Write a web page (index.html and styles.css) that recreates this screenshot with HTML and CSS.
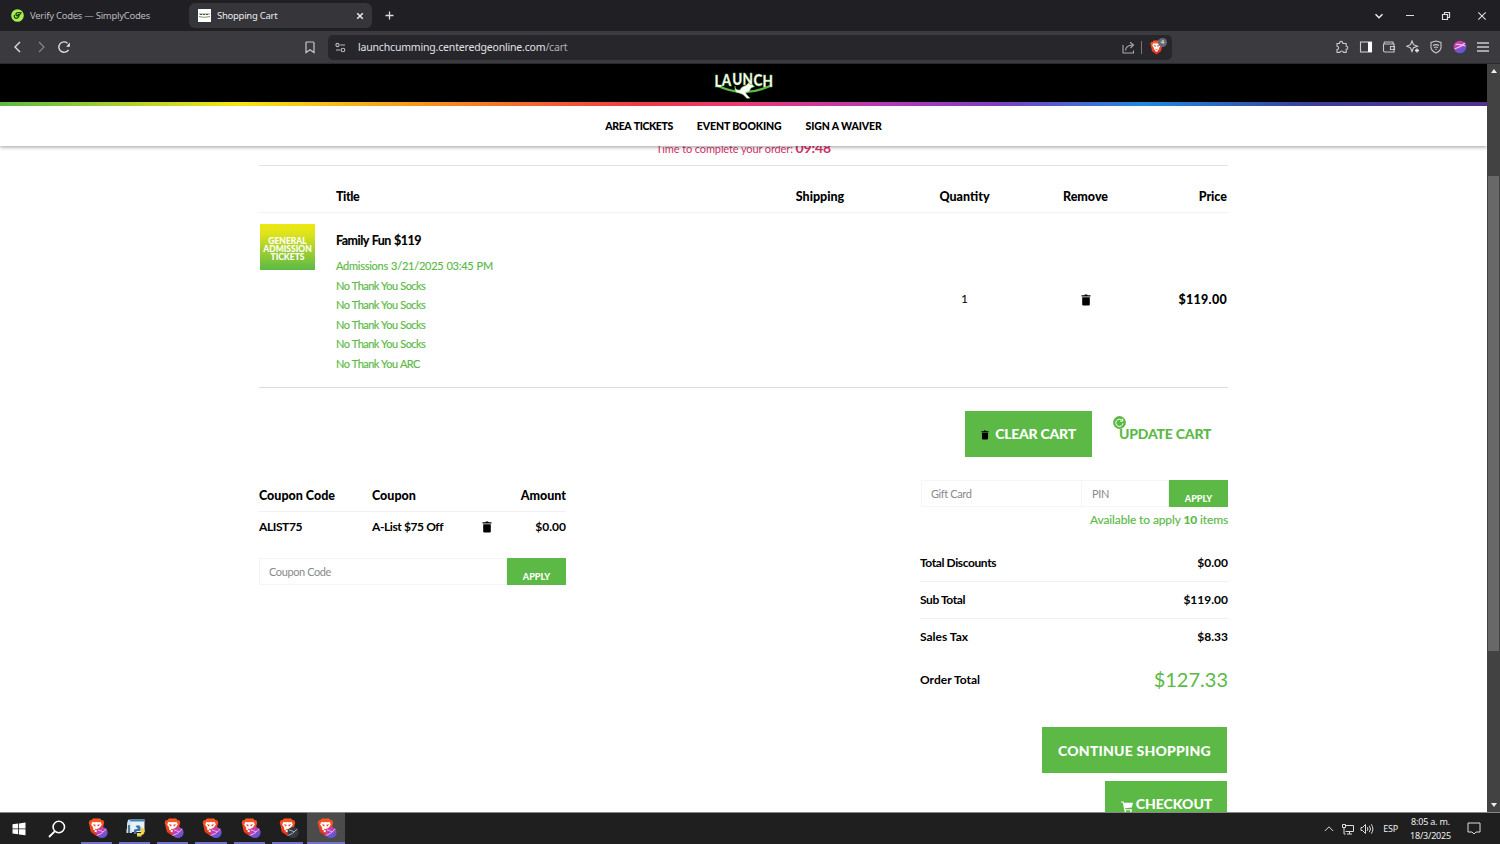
FILE: index.html
```html
<!DOCTYPE html>
<html>
<head>
  <meta charset="UTF-8">
  <title>Shopping Cart</title>
  <link rel="stylesheet" href="styles.css">
</head>
<body>
  <svg width="0" height="0" class="defs">
    <defs>
      <linearGradient id="pinkblue" x1="0" y1="0" x2="0.6" y2="1">
        <stop offset="0" stop-color="#f2358d"/>
        <stop offset="0.45" stop-color="#b544b8"/>
        <stop offset="1" stop-color="#4d5bd8"/>
      </linearGradient>
      <linearGradient id="orange" x1="0" y1="0" x2="0" y2="1">
        <stop offset="0" stop-color="#ff5a24"/>
        <stop offset="1" stop-color="#e0301c"/>
      </linearGradient>
    </defs>
    <symbol id="lion" viewBox="0 0 16 18">
      <path fill="url(#orange)" d="M4.500 0.500h7l1.500 1.600 1.600.2 1 2.600-.5 1.200-1.600 7.400L8 17.600l-5.500-4.100L.9 6.100.4 4.900l1-2.600L3 2.100z"/>
      <path fill="#fff" d="M4 3.800l2.500.3L8 3.800l1.500.3 2.500-.3 1.200 2.600-2 3.200.1 1.800-2 .8.8 1L8 14.200l-2.100-1 .8-1-2-.8.1-1.800-2-3.200z"/>
      <path fill="#e8401f" d="M4.300 6l2.900.6-.6 2zM11.700 6l-2.900.6.6 2zM6.500 10.200L8 11l1.500-.8-.5 1.600H7z"/>
    </symbol>
    <symbol id="brave" viewBox="0 0 20 21">
      <svg width="17" height="18.500"><use href="#lion"/></svg>
      <circle cx="14" cy="14.500" r="5.600" fill="url(#pinkblue)"/>
      <path d="M8.700 17.500q5-1 9.500-6.500M10 12q3 .5 5 2" stroke="#f6bff0" stroke-width=".9" fill="none"/>
    </symbol>
    <symbol id="trash" viewBox="0 0 10 12">
      <path d="M.5 1.300h2.700L4 .5h2l.8.8h2.700v1.200h-9zM1.200 3.300h7.600v7.200q0 1-1 1H2.200q-1 0-1-1z"/>
    </symbol>
  </svg>

  <div class="tabbar">
    <div class="tab tab_back">
      <svg width="13" height="13" viewBox="0 0 13 13"><circle cx="6.500" cy="6.500" r="6.300" fill="#a4f04c"/><path d="M3.500 6q-.8 3 1.700 3.300 2.500 0 3-3.300L10 3.800q-3-.8-4.800.5Q4.500 6.500 6 7L8 5" stroke="#1d3a10" stroke-width="1.200" fill="none"/></svg>
      <span>Verify Codes — SimplyCodes</span>
    </div>
    <div class="tab on">
      <svg width="13" height="13" viewBox="0 0 13 13"><rect width="13" height="13" fill="#fff"/><path d="M1 5h11M1 7.500q5 1.500 11 0" stroke="#7c9a6a" stroke-width="1.200" fill="none"/><path d="M2 5.500h9" stroke="#46583c" stroke-dasharray="2 1"/></svg>
      <span>Shopping Cart</span>
      <svg class="close" width="8" height="8" viewBox="0 0 8 8"><path d="M1.200 1.200l5.600 5.600M6.800 1.200L1.200 6.800" stroke="#eee" stroke-width="1.500"/></svg>
    </div>
    <svg class="plus" width="9" height="9" viewBox="0 0 9 9"><path d="M4.500.5v8M.5 4.500h8" stroke="#ddd" stroke-width="1.300"/></svg>
    <div class="winbtns">
      <svg width="10" height="10" viewBox="0 0 10 10"><path d="M1.500 3.300L5 6.800l3.500-3.500" stroke="#eee" stroke-width="1.500" fill="none"/></svg>
      <svg width="10" height="10" viewBox="0 0 10 10"><path d="M1 4.500h8" stroke="#ddd"/></svg>
      <svg width="10" height="10" viewBox="0 0 10 10"><path d="M1.500 3.500h5v5h-5zM3.500 3V1.500h5v5H7" stroke="#ddd" stroke-width="1.200" fill="none"/></svg>
      <svg width="10" height="10" viewBox="0 0 10 10"><path d="M1.300 1.300l7.400 7.400M8.700 1.300L1.300 8.700" stroke="#ddd" stroke-width="1.100"/></svg>
    </div>
  </div>

  <div class="toolbar">
    <div class="nav">
      <svg width="14" height="14" viewBox="0 0 14 14"><path d="M9 2L4 7l5 5" stroke="#ddd" stroke-width="1.400" fill="none"/></svg>
      <svg width="14" height="14" viewBox="0 0 14 14"><path d="M5 2l5 5-5 5" stroke="#85858a" stroke-width="1.200" fill="none"/></svg>
      <svg width="14" height="14" viewBox="0 0 14 14"><path d="M11.500 9.800A5.200 5.200 0 1 1 10.500 3.200" stroke="#ddd" stroke-width="1.400" fill="none"/><path d="M12.800 2.500v4.200H9.200z" fill="#eee"/></svg>
    </div>
    <svg class="bookmark" width="10" height="13" viewBox="0 0 10 13"><path d="M2 1h6q1 0 1 1v9.500L5 8.700 1 11.500V2q0-1 1-1z" stroke="#c8c8cc" stroke-width="1.200" fill="none"/></svg>
    <div class="address">
      <svg width="11" height="11" viewBox="0 0 11 11"><g stroke="#bbb" stroke-width="1.100" fill="none"><circle cx="2.500" cy="3" r="1.600"/><path d="M5.300 3H10M1 8h4.500"/><circle cx="8" cy="8" r="1.800"/></g></svg>
      <span class="url">launchcumming.centeredgeonline.com<i>/cart</i></span>
      <svg width="13" height="13" viewBox="0 0 13 13"><path d="M1 4v8h10.500V9.500M3.500 9.500q.3-5 7-5.500M8 1.300L11.500 4 8.500 7" stroke="#aaaaae" stroke-width="1.100" fill="none"/></svg>
      <b class="sep"></b>
      <span class="shield"><svg width="13" height="15"><use href="#lion"/></svg><em>4</em></span>
    </div>
    <div class="tools">
      <svg width="14" height="14" viewBox="0 0 14 14"><path d="M2 3.500h2.500a1.700 1.700 0 1 1 3.300 0h3.400v2.700a1.600 1.600 0 1 1 0 3.200v3H8.500a1.800 1.800 0 0 0-3.500 0H2V9.500a1.600 1.600 0 0 0 0-3.200z" stroke="#c8c8cc" stroke-width="1.100" fill="none"/></svg>
      <svg width="14" height="14" viewBox="0 0 14 14"><rect x="1.500" y="2" width="11" height="10" stroke="#ccc" stroke-width="1.100" fill="none"/><path d="M9 2h4v10H9z" fill="#fff"/></svg>
      <svg width="14" height="14" viewBox="0 0 14 14"><path d="M1.500 4v6.500q0 1.500 1.500 1.500h9V4H2.500q-1-.8 0-2H11v2M12.500 6.500h-4v3h4z" stroke="#c8c8cc" stroke-width="1.100" fill="none"/></svg>
      <svg width="14" height="14" viewBox="0 0 14 14"><path d="M6 1l1.500 3.700L11.500 6.300 7.500 7.800 6 11.500 4.500 7.800.8 6.300l3.700-1.600z" stroke="#d0d0d4" stroke-width="1.100" fill="none"/><path d="M11 8.500v4M9 10.500h4" stroke="#eee" stroke-width="1.300"/></svg>
      <svg width="14" height="14" viewBox="0 0 14 14"><g stroke="#c8c8cc" stroke-width="1.100" fill="none"><path d="M7 1l5 1.500v4.700q0 3.300-5 5.800-5-2.500-5-5.800V2.500z"/><path d="M4 5.500q3-1.700 6 0M5 7.500q2-1 4 0M6.300 9.200h1.400"/></g></svg>
      <svg width="14" height="14" viewBox="0 0 14 14"><circle cx="7" cy="7" r="6.300" fill="url(#pinkblue)"/><path d="M1.500 9Q8 7 12 3M2.500 4.500Q7 4 12.500 6" stroke="#f3b8ec" stroke-width="1.200" fill="none"/></svg>
      <svg width="14" height="14" viewBox="0 0 14 14"><path d="M1 3h12M1 7h12M1 11h12" stroke="#ccc" stroke-width="1.300"/></svg>
    </div>
  </div>

  <div class="view">
    <div class="page">
      <div class="header">
        <div class="logo">
          <svg width="62" height="34" viewBox="0 0 62 34">
            <path d="M3 19Q31 33 59 19" stroke="#5cb946" stroke-width="2.400" fill="none"/>
            <text class="logotext" transform="scale(1 1.250)" x="1.500 8.800 19.300 29.500 40.500 49.500" y="17 15.700 15 15 15.700 17">LAUNCH</text>
            <path d="M22 20q0 4.500 5 4 1-3.500 6-4.500l3-3 1 2h2l2.500 2-3.500 1.500-2 3.500-3.500 1 1.500 2.500 3 3-3 .5-4-4-4-1.500q-5-.5-4-7z" fill="#fff" stroke="#6cc644" stroke-width=".5"/>
          </svg>
        </div>
        <div class="rainbow"></div>
        <div class="menu">
          <a>AREA TICKETS</a>
          <a>EVENT BOOKING</a>
          <a>SIGN A WAIVER</a>
        </div>
      </div>

      <div class="container">
        <div class="timer">Time to complete your order: <b>09:48</b></div>

        <div class="cart">
          <div class="row head">
            <span></span><span>Title</span><span>Shipping</span><span>Quantity</span><span>Remove</span><span>Price</span>
          </div>
          <div class="row item">
            <div class="thumb"><span>GENERAL</span><span>ADMISSION</span><span>TICKETS</span></div>
            <div class="info">
              <p class="name">Family Fun $119</p>
              <p class="when">Admissions 3/21/2025 03:45 PM</p>
              <p>No Thank You Socks</p>
              <p>No Thank You Socks</p>
              <p>No Thank You Socks</p>
              <p>No Thank You Socks</p>
              <p>No Thank You ARC</p>
            </div>
            <span></span>
            <span class="qty">1</span>
            <span><svg width="10" height="12"><use href="#trash"/></svg></span>
            <span class="price">$119.00</span>
          </div>
        </div>

        <div class="actions">
          <a class="btn clear"><svg width="8" height="10"><use href="#trash"/></svg>CLEAR CART</a>
          <a class="update">
            <svg width="13" height="13" viewBox="0 0 13 13"><circle cx="6.500" cy="6.500" r="6.400" fill="#5cb946"/><path d="M9.300 4.700A3.600 3.600 0 1 0 10 7.300M9.700 2.500v2.700H7.200" stroke="#fff" stroke-width="1" fill="none"/></svg>
            UPDATE CART
          </a>
        </div>

        <div class="lower">
          <div class="coupons">
            <div class="crow chead"><span>Coupon Code</span><span>Coupon</span><span></span><span>Amount</span></div>
            <div class="crow"><span class="tight">ALIST75</span><span class="tight">A-List $75 Off</span><span><svg width="10" height="12"><use href="#trash"/></svg></span><span>$0.00</span></div>
            <div class="field">
              <div class="input">Coupon Code</div>
              <div class="apply">APPLY</div>
            </div>
          </div>

          <div class="totals">
            <div class="field">
              <div class="input">Gift Card</div>
              <div class="input pin">PIN</div>
              <div class="apply">APPLY</div>
            </div>
            <div class="avail">Available to apply <b>10</b> items</div>
            <div class="line first"><span class="tight">Total Discounts</span><span>$0.00</span></div>
            <div class="line"><span class="tight">Sub Total</span><span>$119.00</span></div>
            <div class="line tax"><span>Sales Tax</span><span>$8.33</span></div>
            <div class="line total"><span>Order Total</span><span class="big">$127.33</span></div>
            <a class="btn continue">CONTINUE SHOPPING</a>
            <a class="btn checkout"><svg width="12" height="11" viewBox="0 0 12 11"><path d="M0 .5h2.500l.4 1.200H12L10.800 6.500 4 7.300l.3.900h6.500v1H3.300L1.800 1.600H0z" fill="#fff"/><circle cx="4.300" cy="10" r="1" fill="#fff"/><circle cx="9.800" cy="10" r="1" fill="#fff"/></svg>CHECKOUT</a>
          </div>
        </div>
      </div>
    </div>

    <div class="scrollbar">
      <i class="up"></i>
      <div class="thumbbar"></div>
      <i class="down"></i>
    </div>
  </div>

  <div class="taskbar">
    <div class="start"><svg width="14" height="14" viewBox="0 0 14 14"><path d="M.5 2.300l5.700-.8v5H.5zM7 1.400L13.500.5v6H7zM.5 7.300h5.700v5l-5.700-.8zM7 7.300h6.500v6L7 12.400z" fill="#fff"/></svg></div>
    <div class="search"><svg width="18" height="18" viewBox="0 0 18 18"><circle cx="10.800" cy="7" r="5.700" stroke="#fff" stroke-width="1.600" fill="none"/><path d="M6.700 11.300L1 17" stroke="#fff" stroke-width="1.800"/></svg></div>
    <div class="app"><svg width="20" height="21"><use href="#brave"/></svg></div>
    <div class="app">
      <svg width="20" height="20" viewBox="0 0 20 20"><path d="M4 1.500h14.500V14H4z" fill="#e9f1f7"/><path d="M4 1.500h14.500v2H4z" fill="#3c86bd"/><path d="M3 1q2 2 2 5v6H1V6q0-3 2-5zM.5 11h5.500v4H.5z" fill="#cfe0ea"/><path d="M2 7h2v8H2z" fill="#507a96"/><path d="M9.500 8q4-2 5 1v4h-4v3H8q-1-5 2-5h2z" fill="#3b77ab"/><path d="M15 9.500q4 0 3.500 4.500-.5 3-3 3v1.500h-4.500V15h4z" fill="#f7d445"/></svg>
    </div>
    <div class="app"><svg width="20" height="21"><use href="#brave"/></svg></div>
    <div class="app"><svg width="20" height="21"><use href="#brave"/></svg></div>
    <div class="app"><svg width="20" height="21"><use href="#brave"/></svg></div>
    <div class="app">
      <svg width="20" height="21" viewBox="0 0 20 21"><svg width="17" height="18.500"><use href="#lion"/></svg><circle cx="14" cy="14.500" r="5.600" fill="#343a42"/><path d="M8.700 17.500q5-1 9.500-6.500M10 12q3 .5 5 2" stroke="#bbb" stroke-width=".9" fill="none"/></svg>
    </div>
    <div class="app active"><svg width="20" height="21"><use href="#brave"/></svg></div>
    <div class="tray">
      <svg width="10" height="8" viewBox="0 0 10 8"><path d="M.8 6L5 1.800 9.200 6" stroke="#ddd" fill="none"/></svg>
      <svg class="net" width="14" height="12" viewBox="0 0 14 12"><path d="M4.500 2.500h8v6h-8M8.500 8.500v2.500M6 11h5M1.500 1.500h3v3h-3zM3 4.500V11h1.500" stroke="#ddd" fill="none"/></svg>
      <svg class="vol" width="14" height="12" viewBox="0 0 14 12"><path d="M1 4.500h1.500L5.500 1.500v9L2.500 7.500H1zM7.300 4.200q1.300 1.800 0 3.600M9.300 2.800q2.400 3.200 0 6.400M11.300 1.300q3.200 4.700 0 9.400" stroke="#ddd" fill="none"/></svg>
      <span class="lang">ESP</span>
      <span class="clock">8:05 a. m.<br>18/3/2025</span>
      <svg class="note" width="14" height="13" viewBox="0 0 14 13"><path d="M1 1h12v9H9L7 12 5 10H1z" stroke="#ddd" fill="none"/></svg>
    </div>
  </div>
</body>
</html>
```

FILE: styles.css
```css
* {
  margin: 0;
  padding: 0;
  box-sizing: border-box;
}
body {
  width: 1500px;
  height: 844px;
  overflow: hidden;
  display: flex;
  flex-direction: column;
  font-family: "Lato", sans-serif;
  font-size: 12px;
  color: #000;
  background: #fff;
}
svg {
  display: block;
  flex: none;
}
.defs {
  position: absolute;
}
i, em {
  font-style: normal;
}

/* browser */
.tabbar {
  height: 31px;
  flex: none;
  display: flex;
  align-items: center;
  background: #1f1f24;
  font-family: "Noto Sans", sans-serif;
  font-size: 9.500px;
  letter-spacing: -0.270px;
  color: #b9b9be;
}
.tab {
  display: flex;
  align-items: center;
  height: 25px;
}
.tab span {
  margin-left: 6px;
}
.tab_back {
  width: 189px;
  padding-left: 11px;
}
.tab.on {
  width: 183px;
  padding: 0 8px 0 9px;
  border-radius: 6px;
  background: #35353a;
  color: #ececee;
}
.tab .close {
  margin-left: auto;
}
.plus {
  margin-left: 13px;
}
.winbtns {
  margin-left: auto;
  margin-right: 13px;
  display: flex;
  gap: 26px;
}
.winbtns svg:first-child {
  margin-right: -5px;
}
.toolbar {
  height: 33px;
  flex: none;
  display: flex;
  align-items: center;
  background: #3b3b3f;
  border-bottom: 1px solid #2a2a2d;
  font-family: "Noto Sans", sans-serif;
}
.nav {
  display: flex;
  gap: 9px;
  margin-left: 11px;
}
.bookmark {
  margin-left: 234px;
}
.address {
  width: 844px;
  height: 25px;
  margin-left: 13px;
  padding: 0 5px 0 7px;
  display: flex;
  align-items: center;
  border-radius: 5px;
  background: #26262b;
}
.url {
  flex: 1;
  margin-left: 12px;
  padding-bottom: 1px;
  font-size: 10.500px;
  letter-spacing: -0.180px;
  color: #e2e2e5;
}
.url i {
  color: #b0b0b5;
}
.sep {
  width: 1px;
  height: 13px;
  margin: 0 8px 0 6px;
  background: #77777c;
}
.shield {
  position: relative;
  width: 17px;
}
.shield em {
  position: absolute;
  left: 8px;
  top: -2px;
  width: 9px;
  height: 9px;
  border-radius: 50%;
  background: #656a76;
  color: #fff;
  font-size: 6px;
  line-height: 9px;
  text-align: center;
}
.tools {
  margin-left: auto;
  margin-right: 10px;
  display: flex;
  gap: 9.500px;
}

/* page */
.view {
  height: 749px;
  flex: none;
  display: flex;
  overflow: hidden;
  border-bottom: 1px solid #888;
}
.page {
  width: 1487px;
  overflow: hidden;
}
.header {
  position: relative;
  z-index: 2;
  height: 82px;
  background: #fff;
  box-shadow: 0 1px 4px rgba(0,0,0,0.4);
}
.logo {
  height: 38px;
  background: #000;
  display: flex;
  align-items: center;
  justify-content: center;
}
.logotext {
  font-size: 13.500px;
  font-weight: 900;
  fill: #fff;
  stroke: #6cc644;
  stroke-width: 0.300px;
}
.rainbow {
  height: 4px;
  background: linear-gradient(90deg, #5cb946, #f5e614 16%, #f68b1f 30%, #ee3a43 43%, #e83a75 50%, #b03bb8 60%, #7d3fc0 67%, #1f8ade 77%, #3b3f9c 88%, #55308f);
}
.menu {
  height: 40px;
  display: flex;
  align-items: center;
  justify-content: center;
  gap: 24px;
  font-size: 10.500px;
  font-weight: 900;
  letter-spacing: -0.120px;
}
.menu a:first-child {
  letter-spacing: -0.400px;
  word-spacing: 1px;
}
.container {
  width: 969px;
  margin-left: 259px;
}
.timer {
  height: 19px;
  line-height: 15px;
  margin-top: -8px;
  padding-top: 2px;
  text-align: center;
  font-size: 11px;
  letter-spacing: -0.120px;
  color: #d6336c;
  box-sizing: content-box;
}
.timer b {
  font-size: 14px;
}
.cart {
  margin-top: 6px;
  border-top: 1px solid #e2e2e2;
  border-bottom: 1px solid #ddd;
}
.row {
  display: grid;
  grid-template-columns: 77px 412px 144px 145px 97px 93px;
  align-items: center;
  text-align: center;
}
.head {
  height: 47px;
  padding-top: 14px;
  border-bottom: 1px solid #f2f2f2;
  font-size: 12.500px;
  font-weight: 900;
}
.head span:nth-child(2) {
  text-align: left;
  letter-spacing: -0.400px;
}
.row > :last-child {
  text-align: right;
}
.item {
  height: 174px;
}
.item svg {
  margin: auto;
}
.thumb {
  align-self: start;
  width: 55px;
  height: 46px;
  margin: 11px 0 0 1px;
  padding-top: 4px;
  display: flex;
  flex-direction: column;
  align-items: center;
  justify-content: center;
  background: linear-gradient(#ece80f, #e0e31c 20%, #5cb946);
  color: #fff;
  font-size: 8.500px;
  line-height: 8px;
  font-weight: 900;
}
.info {
  padding-top: 3px;
  text-align: left;
  font-size: 11px;
  letter-spacing: -0.550px;
  word-spacing: 0.500px;
  color: #5cb946;
}
.info p {
  height: 19.500px;
  line-height: 19.500px;
  -webkit-text-stroke: 0.150px;
}
.info .name {
  height: 26px;
  line-height: 21px;
  font-size: 12.500px;
  font-weight: bold;
  letter-spacing: -0.500px;
  color: #000;
}
.info .when {
  letter-spacing: -0.250px;
}
.qty {
  padding-bottom: 3px;
}
.price {
  padding-bottom: 2px;
  font-size: 12.500px;
  font-weight: 900;
  letter-spacing: 0.300px;
}
.actions {
  height: 92px;
  padding-top: 23px;
  display: flex;
  justify-content: flex-end;
}
.btn {
  height: 46px;
  display: flex;
  align-items: center;
  justify-content: center;
  background: #5cb946;
  color: #fff;
  font-size: 14px;
  font-weight: 900;
}
.clear {
  width: 127px;
  padding-bottom: 1px;
  letter-spacing: -0.250px;
}
.clear svg {
  margin: 2px 6px 0 0;
}
.update {
  position: relative;
  width: 136px;
  padding-left: 27px;
  line-height: 46px;
  font-size: 14px;
  font-weight: 900;
  letter-spacing: -0.200px;
  color: #5cb946;
}
.update svg {
  position: absolute;
  left: 21px;
  top: 5px;
}
.lower {
  display: flex;
  justify-content: space-between;
}
.coupons {
  width: 307px;
}
.crow {
  display: grid;
  grid-template-columns: 113px 100px 30px 1fr;
  align-items: center;
  height: 31px;
  padding-bottom: 2px;
  font-weight: bold;
}
.crow svg {
  margin: auto;
}
.crow span:last-child {
  text-align: right;
}
.crow .tight, .line .tight {
  letter-spacing: -0.400px;
}
.chead {
  height: 32px;
  padding-bottom: 1px;
  border-bottom: 1px solid #f2f2f2;
  font-size: 12.500px;
  font-weight: 900;
}
.field {
  display: flex;
  height: 27px;
}
.coupons .field {
  margin-top: 15px;
}
.input {
  flex: 1;
  padding-left: 9px;
  border: 1px solid #f5f5f5;
  line-height: 25px;
  font-size: 11px;
  letter-spacing: -0.400px;
  color: #8a8a8a;
}
.input.pin {
  flex: none;
  width: 87px;
  padding-left: 10px;
  border-left: 0;
}
.apply {
  width: 59px;
  padding-top: 5px;
  background: #5cb946;
  color: #fff;
  font-size: 9px;
  line-height: 27px;
  font-weight: 900;
  text-align: center;
}
.totals {
  width: 308px;
  display: flex;
  flex-direction: column;
}
.totals .field {
  margin-left: 1px;
}
.avail {
  height: 25px;
  line-height: 25px;
  text-align: right;
  font-size: 12px;
  letter-spacing: -0.120px;
  color: #5cb946;
  -webkit-text-stroke: 0.150px;
}
.line {
  display: flex;
  justify-content: space-between;
  align-items: center;
  height: 37px;
  padding-bottom: 2px;
  border-bottom: 1px solid #f2f2f2;
  font-weight: bold;
}
.line.first {
  margin-top: 13px;
}
.tax, .total {
  border: 0;
}
.total {
  height: 49px;
  padding-bottom: 3px;
}
.big {
  font-size: 20px;
  font-weight: normal;
  color: #5cb946;
}
.continue {
  width: 185px;
  align-self: flex-end;
  margin: 22px 1px 8px 0;
  letter-spacing: 0.220px;
}
.checkout {
  width: 122px;
  align-self: flex-end;
  margin-right: 1px;
  padding-bottom: 1px;
}
.checkout svg {
  margin: 5px 3px 0 1px;
}
.scrollbar {
  width: 13px;
  display: flex;
  flex-direction: column;
  align-items: center;
  background: #424242;
}
.up, .down {
  border: 3px solid transparent;
}
.up {
  margin-top: 2px;
  border-bottom: 4px solid #eee;
}
.thumbbar {
  width: 11px;
  height: 475px;
  margin-top: 103px;
  background: #686868;
}
.down {
  margin-top: auto;
  margin-bottom: 2px;
  border-top: 4px solid #eee;
}

/* taskbar */
.taskbar {
  height: 31px;
  flex: none;
  display: flex;
  background: #1f1f1f;
  font-family: "Noto Sans", sans-serif;
  color: #eee;
}
.start, .search {
  width: 38px;
  display: flex;
  align-items: center;
  justify-content: center;
}
.search {
  margin-right: 1px;
}
.app {
  width: 31.300px;
  margin: 0 3.500px;
  padding: 5px 0 0 7px;
  border-bottom: 2px solid #7472c4;
}
.app.active {
  width: 37.500px;
  margin: 0 0 0 0.500px;
  padding-left: 10px;
  background: #4b4b4b;
}
.tray {
  margin-left: auto;
  display: flex;
  align-items: center;
  margin-right: 19px;
}
.net {
  margin-left: 7px;
}
.vol {
  margin-left: 5px;
}
.lang {
  margin-left: 9px;
  font-size: 9px;
  letter-spacing: -0.200px;
}
.clock {
  width: 41px;
  margin-left: 12px;
  font-size: 9px;
  line-height: 14px;
  letter-spacing: -0.200px;
  text-align: center;
  white-space: nowrap;
}
.note {
  margin-left: 16px;
}
```
